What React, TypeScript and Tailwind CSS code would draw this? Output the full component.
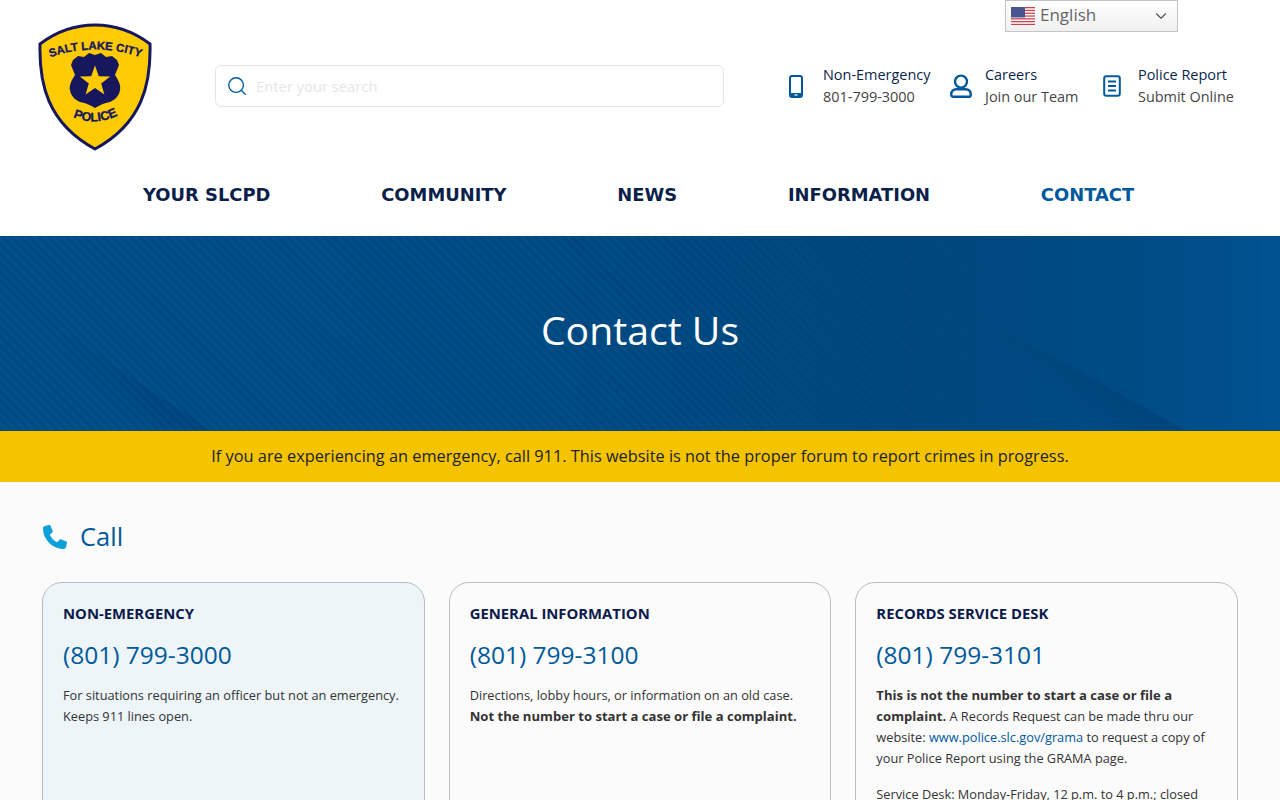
import React from 'react';
import { ChevronDown, Search } from 'lucide-react';

const NAV = ['YOUR SLCPD', 'COMMUNITY', 'NEWS', 'INFORMATION', 'CONTACT'];

const Badge = () => (
  <svg viewBox="0 0 114 128" className="w-[114px] h-[128px] shrink-0">
    <path d="M57 2 C76 2 95 8 112 21 C113 60 105 100 57 126 C9 100 1 60 2 21 C19 8 38 2 57 2 Z" fill="#ffcb05" stroke="#17175e" strokeWidth="3" />
    <path d="M35 37 L40 33 L46 34 L51 30 L57 32 L63 30 L68 34 L74 33 L79 37 L81 42 L77 52 C81 58 83 63 82 67 C81 74 76 77 72 79 C66 80 62 82 57 85 C52 82 48 80 42 79 C38 77 33 74 32 67 C31 63 33 58 37 52 L33 42 Z" fill="#17175e" />
    <path d="M57 42.5 L60.8 53.2 L72.2 53.6 L63.2 60.5 L66.4 71.5 L57 65 L47.6 71.5 L50.8 60.5 L41.8 53.6 L53.2 53.2 Z" fill="#ffcb05" />
    <path id="badgeTop" d="M10 35 Q57 18 105 35" fill="none" />
    <text fontFamily="'Liberation Sans', sans-serif" fontSize="11.4" fontWeight="700" fill="#17175e" stroke="#17175e" strokeWidth="0.35">
      <textPath href="#badgeTop" startOffset="50%" textAnchor="middle">SALT LAKE CITY</textPath>
    </text>
    <path id="badgeBottom" d="M31 92 Q57 106 84 90" fill="none" />
    <text fontFamily="'Liberation Sans', sans-serif" fontSize="12.5" fontWeight="700" fill="#17175e" stroke="#17175e" strokeWidth="0.35">
      <textPath href="#badgeBottom" startOffset="50%" textAnchor="middle">POLICE</textPath>
    </text>
  </svg>
);

const UsFlag = () => (
  <svg viewBox="0 0 24 18" className="w-6 h-[18px] shrink-0">
    <rect width="24" height="18" fill="#fff" />
    {[0, 2.8, 5.6, 8.4, 11.2, 14, 16.8].map((y) => (
      <rect key={y} y={y} width="24" height="1.3" fill="#c8424f" />
    ))}
    <rect width="14" height="10.5" fill="#4a5590" />
  </svg>
);

const PhoneIcon = () => (
  <svg viewBox="0 0 16 23" className="w-4 h-[23px]" fill="none">
    <rect x="2" y="1" width="12" height="21" rx="2" stroke="#00599c" strokeWidth="2" />
    <rect x="2" y="18" width="12" height="4" fill="#00599c" />
    <rect x="6.5" y="19.4" width="3" height="1.2" fill="#fff" />
  </svg>
);

const UserIcon = () => (
  <svg viewBox="0 0 22 24" className="w-[22px] h-6" fill="none" stroke="#00599c" strokeWidth="2.4">
    <circle cx="11" cy="7.6" r="6" />
    <path d="M6.5 15.2 H15.5 C18.8 15.2 20.8 17.4 20.8 20.4 C20.8 22 20 22.8 18.6 22.8 H3.4 C2 22.8 1.2 22 1.2 20.4 C1.2 17.4 3.2 15.2 6.5 15.2 Z" />
  </svg>
);

const DocIcon = () => (
  <svg viewBox="0 0 18 22" className="w-[18px] h-[22px]" fill="none" stroke="#00599c" strokeWidth="2">
    <rect x="1.2" y="1.2" width="15.6" height="19.6" rx="2" />
    <path d="M5 6.5 H13 M5 11 H13 M5 15.5 H13" />
  </svg>
);

const QuickLink = ({ icon, title, sub, className }: { icon: React.ReactNode; title: string; sub: string; className: string }) => (
  <div className={`flex items-center ${className}`}>
    <div className="w-[35px] shrink-0">{icon}</div>
    <div className="text-[14.45px] leading-[22px]">
      <div className="text-[#0b1f4b] font-medium">{title}</div>
      <div className="text-[#444]">{sub}</div>
    </div>
  </div>
);

const Card = ({ title, phone, tint, children }: { title: string; phone: string; tint?: boolean; children: React.ReactNode }) => (
  <div className={`h-[300px] rounded-[20px] border border-[#b9bdc1] pt-[19px] px-[20px] ${tint ? 'bg-[#edf5f9]' : 'bg-[#fbfbfb]'}`}>
    <h3 className="text-[14.85px] leading-[22px] font-bold text-[#0b1a4b]">{title}</h3>
    <div className="mt-[14px] text-[24.5px] leading-[34px] text-[#00599c]">{phone}</div>
    <div className="mt-[13px] text-[12.78px] leading-[21px] text-[#333] [&_b]:text-[13.08px]">{children}</div>
  </div>
);

export default function App() {
  return (
    <div className="relative h-[800px] overflow-hidden bg-[#fbfbfb] font-['Open_Sans',sans-serif]">
      {/* Language picker */}
      <div className="absolute top-0 left-[1005px] w-[173px] h-[32px] flex items-center pl-[5px] pr-[7px] border border-[#c4c4c4] bg-gradient-to-b from-white to-[#f0f0f0] z-10">
        <UsFlag />
        <span className="ml-[5px] -mt-[2px] text-[17px] text-[#666] flex-1">English</span>
        <ChevronDown size={18} strokeWidth={1.5} className="text-[#555]" />
      </div>

      <header className="bg-white h-[236px]">
        <div className="flex items-start pl-[38px] pt-[23px] h-[178px]">
          <Badge />
          <div className="ml-[63px] mt-[42px] w-[509px] h-[42px] flex items-center pl-[10px] border border-[#dfe5ea] rounded-[6px] bg-white">
            <Search size={22} strokeWidth={1.5} className="text-[#00599c]" />
            <span className="ml-[8px] text-[14.75px] text-[#e6e6e6]">Enter your search</span>
          </div>
          <div className="ml-[64px] mt-[41px] flex items-center">
            <QuickLink className="w-[162px]" title="Non-Emergency" sub="801-799-3000" icon={<PhoneIcon />} />
            <QuickLink className="w-[153px]" title="Careers" sub="Join our Team" icon={<UserIcon />} />
            <QuickLink className="" title="Police Report" sub="Submit Online" icon={<DocIcon />} />
          </div>
        </div>
        <nav className="flex gap-[110.8px] pl-[143px] pt-[5px] font-['DejaVu_Sans',sans-serif] font-bold text-[17.9px] leading-[24px] text-[#0b1f4b]">
          {NAV.map((n) => (
            <a key={n} className={n === 'CONTACT' ? 'text-[#00599c]' : ''}>{n}</a>
          ))}
        </nav>
      </header>

      <section className="relative h-[195px] flex items-center justify-center overflow-hidden border-b border-[#0d4a6b] bg-[linear-gradient(to_right,#00508c_0%,#004e88_40%,#00487e_72%,#004b84_88%,#005291_100%)]">
        {/* stripes and the darker diagonal shapes of the banner */}
        <div className="absolute inset-0 bg-[repeating-linear-gradient(45deg,rgba(0,30,70,0.12)_0,rgba(0,30,70,0.12)_3px,transparent_3px,transparent_6.5px)] [mask-image:linear-gradient(to_right,black_45%,transparent_80%)]" />
        <div className="absolute left-[60px] bottom-0 w-[150px] h-[100px] bg-[linear-gradient(45deg,transparent_30%,rgba(0,40,85,0.3)_75%)] [clip-path:polygon(0_0,100%_100%,0_100%)]" />
        <div className="absolute left-[1000px] bottom-0 w-[185px] h-[102px] bg-[linear-gradient(45deg,transparent_30%,rgba(0,40,85,0.3)_75%)] [clip-path:polygon(0_0,100%_100%,0_100%)]" />
        <h1 className="relative text-white text-[39.2px] leading-[46px] font-normal -mt-[6px]">Contact Us</h1>
      </section>

      <div className="h-[51px] bg-[#f4c400] flex items-center justify-center text-[16.33px] font-medium text-[#222]">
        If you are experiencing an emergency, call 911. This website is not the proper forum to report crimes in progress.
      </div>

      <main className="px-[42px] pt-[38px]">
        <h2 className="flex items-center h-[34px] text-[25.5px] leading-[34px] text-[#00599c]">
          <svg viewBox="0 0 512 512" className="w-[24px] h-[24px] ml-[1px] mr-[13px] fill-[#0ea0d8]">
            <path d="M164.9 24.6c-7.7-18.6-28-28.5-47.4-23.2l-88 24C12.1 30.2 0 46 0 64c0 247.4 200.6 448 448 448 18 0 33.8-12.1 38.6-29.5l24-88c5.3-19.4-4.6-39.7-23.2-47.4l-96-40c-16.3-6.8-35.2-2.1-46.3 11.6L304.7 368C234.3 334.7 177.3 277.7 144 207.3l49.3-40.3c13.7-11.2 18.4-30 11.6-46.3l-40-96z" />
          </svg>
          <span className="-mt-[2px]">Call</span>
        </h2>
        <div className="grid grid-cols-3 gap-[24px] mt-[28px]">
          <Card tint title="NON-EMERGENCY" phone="(801) 799-3000">
            For situations requiring an officer but not an emergency. Keeps 911 lines open.
          </Card>
          <Card title="GENERAL INFORMATION" phone="(801) 799-3100">
            Directions, lobby hours, or information on an old case. <b>Not the number to start a case or file a complaint.</b>
          </Card>
          <Card title="RECORDS SERVICE DESK" phone="(801) 799-3101">
            <p><b>This is not the number to start a case or file a complaint.</b> A Records Request can be made thru our website: <a className="text-[#00599c]">www.police.slc.gov/grama</a> to request a copy of your Police Report using the GRAMA page.</p>
            <p className="mt-[15px]">Service Desk: Monday-Friday, 12 p.m. to 4 p.m.; closed</p>
          </Card>
        </div>
      </main>
    </div>
  );
}
